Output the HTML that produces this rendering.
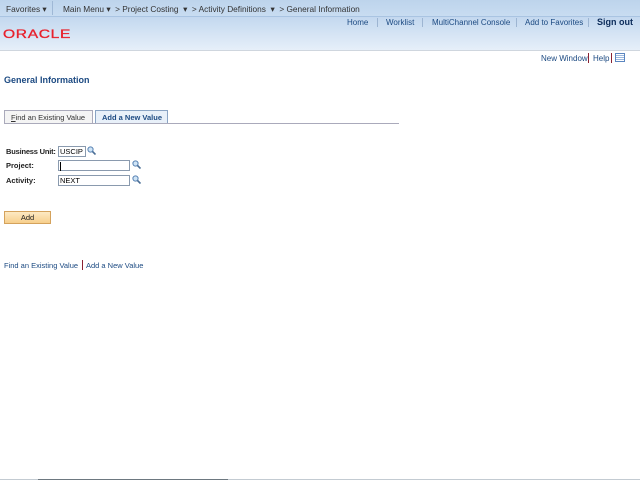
<!DOCTYPE html>
<html><head><style>
body{margin:0;width:640px;height:480px;overflow:hidden;background:#fff;font-family:"Liberation Sans",Arial,sans-serif;font-size:8px;color:#000;position:relative}
.t{position:absolute;white-space:nowrap}
#bar{position:absolute;left:0;top:0;width:640px;height:16px;background:linear-gradient(#bdd4ec,#c8dcf1);border-bottom:1px solid #a9c4e2}
#hdr{position:absolute;left:0;top:17px;width:640px;height:33px;background:linear-gradient(#c3d8ef,#e6eff9)}
#hl{position:absolute;left:0;top:50px;width:640px;height:1px;background:#cfd6de}
.bt{color:#333;font-size:8.3px;top:4px}
.hl{color:#1c4a82;font-size:8px;top:18px}
.sep{position:absolute;width:1px;height:9px;background:#9db5d2;top:18px}
.lnk{color:#1c4a82}
.inp{position:absolute;height:11px;border:1px solid #8a9aae;background:#fff;font-size:7.5px;line-height:10px;padding-left:1px;box-sizing:border-box}
.mg{position:absolute;width:9px;height:9px}
.lb{font-weight:bold;color:#222;font-size:7.5px}
</style></head><body>
<div id="bar"></div>
<div class="t bt" style="left:6px">Favorites ▾</div>
<div style="position:absolute;left:52px;top:1px;width:1px;height:14px;background:#9fb8d6"></div>
<div class="t bt" style="left:63px">Main Menu ▾ &nbsp;&gt; Project Costing &nbsp;▾ &nbsp;&gt; Activity Definitions &nbsp;▾ &nbsp;&gt; General Information</div>
<div id="hdr"></div>
<div id="hl"></div>
<div class="t" style="left:3px;top:27px;color:#e8212c;font-size:12px;letter-spacing:0.5px;transform:scaleX(1.3);transform-origin:left;-webkit-text-stroke:0.3px #e8212c">ORACLE</div>
<div class="t hl" style="left:347px">Home</div>
<div class="sep" style="left:377px"></div>
<div class="t hl" style="left:386px">Worklist</div>
<div class="sep" style="left:422px"></div>
<div class="t hl" style="left:432px">MultiChannel Console</div>
<div class="sep" style="left:516px"></div>
<div class="t hl" style="left:525px">Add to Favorites</div>
<div class="sep" style="left:588px"></div>
<div class="t hl" style="left:597px;font-weight:bold;color:#0c2c5a;font-size:9px;top:17px">Sign out</div>
<div class="t lnk" style="left:541px;top:54px">New Window</div>
<div style="position:absolute;left:588px;top:53px;width:1px;height:10px;background:#8b2131"></div>
<div class="t lnk" style="left:593px;top:54px">Help</div>
<div style="position:absolute;left:611px;top:53px;width:1px;height:10px;background:#8b2131"></div>
<div style="position:absolute;left:615px;top:53px;width:10px;height:9px;border:1px solid #5b86c0;box-sizing:border-box;background:repeating-linear-gradient(#fff 0 1px,#9bb8de 1px 2px)"></div>
<div class="t" style="left:4px;top:75px;font-weight:bold;color:#1c4a82;font-size:9px">General Information</div>
<div style="position:absolute;left:4px;top:110px;width:89px;height:13px;border:1px solid #aab;border-bottom:none;background:#f4f4f4;box-sizing:border-box"></div>
<div class="t" style="left:11px;top:113px;color:#333;font-size:7.5px"><u>F</u>ind an Existing Value</div>
<div style="position:absolute;left:95px;top:110px;width:73px;height:14px;border:1px solid #8aa4c4;border-bottom:none;background:#e8f0f9;box-sizing:border-box"></div>
<div class="t" style="left:102px;top:113px;font-weight:bold;color:#1c4a82;font-size:7.5px">Add a New Value</div>
<div style="position:absolute;left:4px;top:123px;width:395px;height:1px;background:#aab"></div>
<div class="t lb" style="left:6px;top:147px;letter-spacing:-0.2px">Business Unit:</div>
<div class="t lb" style="left:6px;top:161px">Project:</div>
<div class="t lb" style="left:6px;top:176px">Activity:</div>
<div class="inp" style="left:58px;top:146px;width:28px">USCIP</div>
<div class="inp" style="left:58px;top:160px;width:72px"><span style="display:inline-block;width:1px;height:9px;background:#000;vertical-align:middle"></span></div>
<div class="inp" style="left:58px;top:175px;width:72px">NEXT</div>
<svg class="mg" style="left:87px;top:146px" viewBox="0 0 9 9"><circle cx="3.5" cy="3.5" r="2.6" fill="#cfe4f6" stroke="#5a84b4"/><path d="M5.5 5.5l3 3" stroke="#4a6e96" stroke-width="1.6"/></svg>
<svg class="mg" style="left:132px;top:160px" viewBox="0 0 9 9"><circle cx="3.5" cy="3.5" r="2.6" fill="#cfe4f6" stroke="#5a84b4"/><path d="M5.5 5.5l3 3" stroke="#4a6e96" stroke-width="1.6"/></svg>
<svg class="mg" style="left:132px;top:175px" viewBox="0 0 9 9"><circle cx="3.5" cy="3.5" r="2.6" fill="#cfe4f6" stroke="#5a84b4"/><path d="M5.5 5.5l3 3" stroke="#4a6e96" stroke-width="1.6"/></svg>
<div style="position:absolute;left:4px;top:211px;width:47px;height:13px;border:1px solid #d4a25c;background:linear-gradient(#fde9c4,#f7cf8c);box-sizing:border-box;text-align:center;line-height:11px;color:#222;font-size:7.5px">Add</div>
<div class="t lnk" style="left:4px;top:261px;font-size:7.5px">Find an Existing Value</div>
<div style="position:absolute;left:82px;top:260px;width:1px;height:10px;background:#8b2131"></div>
<div class="t lnk" style="left:86px;top:261px;font-size:7.5px">Add a New Value</div>
<div style="position:absolute;left:0;top:479px;width:640px;height:1px;background:#c3cbd2"></div>
<div style="position:absolute;left:38px;top:479px;width:190px;height:1px;background:#6d7880"></div>
</body></html>
